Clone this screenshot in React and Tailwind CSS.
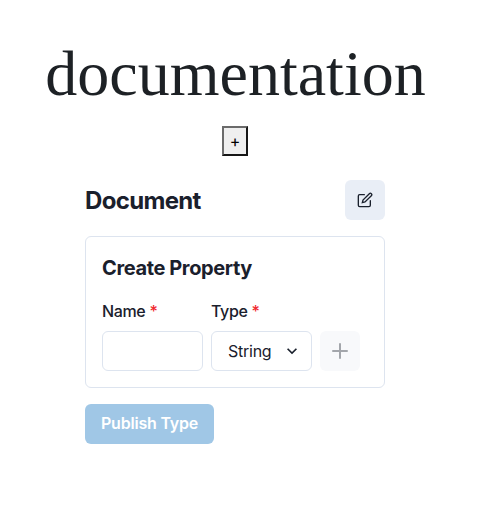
function EditIcon() {
  return (
    <svg viewBox="0 0 24 24" className="size-4" fill="none" stroke="currentColor" strokeLinecap="round" strokeWidth="2">
      <path d="M11 4H4a2 2 0 0 0-2 2v14a2 2 0 0 0 2 2h14a2 2 0 0 0 2-2v-7" />
      <path d="M18.5 2.5a2.121 2.121 0 0 1 3 3L12 15l-4 1 1-4 9.5-9.5z" />
    </svg>
  );
}

function AddIcon() {
  return (
    <svg viewBox="0 0 24 24" className="size-4" fill="currentColor">
      <path d="M0,12a1.5,1.5,0,0,0,1.5,1.5h8.75a.25.25,0,0,1,.25.25V22.5a1.5,1.5,0,0,0,3,0V13.75a.25.25,0,0,1,.25-.25H22.5a1.5,1.5,0,0,0,0-3H13.75a.25.25,0,0,1-.25-.25V1.5a1.5,1.5,0,0,0-3,0v8.75a.25.25,0,0,1-.25.25H1.5A1.5,1.5,0,0,0,0,12Z" />
    </svg>
  );
}

function ChevronIcon() {
  return (
    <svg viewBox="0 0 24 24" className="size-5" fill="currentColor">
      <path d="M16.59 8.59L12 13.17 7.41 8.59 6 10l6 6 6-6z" />
    </svg>
  );
}

function Label({ children }) {
  return (
    <div className="mb-2 flex h-6 items-center text-[16px] font-medium leading-6 tracking-[-0.35px]">
      {children}
      <span className="ml-1 text-[#f0282d]">*</span>
    </div>
  );
}

export default function App() {
  return (
    <div className="flex h-[508px] w-[470px] flex-col items-center bg-white pt-[26px] font-['Inter',sans-serif] text-[#1a202c]">
      <h1 className="h-[100px] pl-px font-['Liberation_Serif',serif] text-[64px] leading-[96px] text-[#1d2125]">documentation</h1>
      <button className="flex h-[30px] w-[26px] items-center justify-center border-2 border-b-[#161616] border-l-[#6b6b6b] border-r-[#161616] border-t-[#6b6b6b] bg-[#efefef] text-[16px] leading-[26px] text-black">
        +
      </button>
      <main className="mt-6 w-[300px]">
        <header className="flex h-10 items-center justify-between">
          <h2 className="pt-0.5 text-[24px] font-bold leading-8 tracking-[-0.67px]">Document</h2>
          <button className="flex size-10 items-center justify-center rounded-md bg-[#e9eef6]">
            <EditIcon />
          </button>
        </header>
        <section className="mt-4 h-[152px] rounded-md border border-[#dde4ef] px-4 pt-[19px]">
          <h3 className="text-[20px] font-bold leading-6 tracking-[-0.38px]">Create Property</h3>
          <div className="mt-[19px] flex items-end gap-2">
            <div className="w-[101px]">
              <Label>Name</Label>
              <input className="block h-10 w-full rounded-md border border-[#dde4ef] px-4" />
            </div>
            <div className="w-[101px]">
              <Label>Type</Label>
              <div className="flex h-10 items-center justify-between rounded-md border border-[#dde4ef] pl-4 pr-[9px] text-[16px] tracking-[-0.25px]">
                String
                <ChevronIcon />
              </div>
            </div>
            <button className="flex size-10 items-center justify-center rounded-md bg-[#f8f9fb] text-[#a3a6ab]">
              <AddIcon />
            </button>
          </div>
        </section>
        <button className="mt-4 flex h-10 w-[129px] items-center justify-center whitespace-nowrap rounded-md bg-[#a0c7e6] pb-0.5 text-[16px] font-semibold tracking-[-0.2px] text-white">
          Publish Type
        </button>
      </main>
    </div>
  );
}
